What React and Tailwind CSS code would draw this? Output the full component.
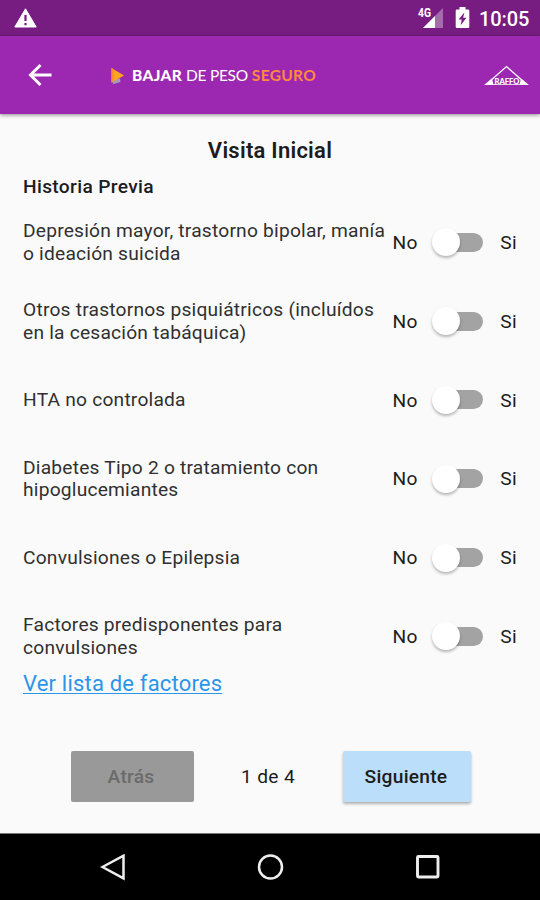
import React, { useState } from 'react';

const preguntas = [
  { id: 'depresion', lineas: ['Depresión mayor, trastorno bipolar, manía', 'o ideación suicida'] },
  { id: 'psiquiatricos', lineas: ['Otros trastornos psiquiátricos (incluídos', 'en la cesación tabáquica)'] },
  { id: 'hta', lineas: ['HTA no controlada'] },
  { id: 'diabetes', lineas: ['Diabetes Tipo 2 o tratamiento con', 'hipoglucemiantes'] },
  { id: 'convulsiones', lineas: ['Convulsiones o Epilepsia'] },
  { id: 'factores', lineas: ['Factores predisponentes para', 'convulsiones'] }
];

const StatusBar = () => (
  <div className="flex h-9 shrink-0 items-center bg-[#771d82] pl-[14px] pr-[11px] text-white">
    <svg className="h-5 w-[23px]" viewBox="0 0 23 20">
      <path d="M11.5 .8 L22.2 19 H.8 Z" fill="#fff" stroke="#fff" strokeLinejoin="round" />
      <path d="M11.5 7v6M11.5 15v2.2" stroke="#771d82" strokeWidth="2.2" />
    </svg>
    <svg className="ml-auto h-[22px] w-[27px]" viewBox="0 0 27 22">
      <path d="M26 1V21H6Z" fill="#fff" opacity=".35" />
      <path d="M18 9V21H6Z" fill="#fff" />
      <path d="M0 0H14V11.500H0Z" fill="#771d82" />
      <text x="1" y="10" fill="#fff" fontFamily="Roboto, sans-serif" fontSize="12" fontWeight="700" letterSpacing="0" textLength="13" lengthAdjust="spacingAndGlyphs">
        4G
      </text>
    </svg>
    <svg className="ml-[11px] h-[22px] w-[15px]" viewBox="0 0 15 22">
      <path d="M4.5 0h6v2.5H13a1.3 1.3 0 0 1 1.3 1.3v15.9A1.3 1.3 0 0 1 13 21H2a1.3 1.3 0 0 1-1.3-1.3V3.8A1.3 1.3 0 0 1 2 2.5h2.5Z" fill="#fff" />
      <path d="M9.3 5.5 3.6 12.6h3.1L5.7 18.3l5.7-7.6H8.2Z" fill="#771d82" />
    </svg>
    <span className="ml-[9px] mt-[2px] w-[50px] whitespace-nowrap text-[20px] font-medium leading-6 tracking-[-0.1px]">10:05</span>
  </div>
);

const AppBar = () => (
  <header className="relative flex h-[78px] shrink-0 items-center bg-[#9c27b0] pl-[28px] pr-[11px] shadow-[0_1px_4px_rgba(0,0,0,0.45)]">
    <svg className="h-6 w-6" viewBox="0 0 24 24" fill="none" stroke="#fff" strokeWidth="3">
      <path d="M23.500 12H2.500M12.500 2 2.500 12l10 10" />
    </svg>
    <svg className="ml-[59px] h-[17px] w-[13px]" viewBox="0 0 13 17">
      <path d="M1 13 9 11.500 9.500 15 2 17Z" fill="#a79bb5" />
      <path d="M.5 1 13 8.500 .5 15.500Z" fill="#ffa51f" />
      <path d="M.5 1 3 2.500 2 14.700 .5 15.500Z" fill="#ff8a2b" />
      <path d="M1.500 15 7 12 9 13.500 4 16.500Z" fill="#a79bb5" />
    </svg>
    <div className="ml-2 flex w-[184px] gap-1 whitespace-nowrap font-['Lato'] text-[15.500px] leading-5 text-white">
      <span className="font-black">BAJAR</span>
      <span className="tracking-[-0.3px]">DE PESO</span>
      <span className="font-bold text-[#ff8a3c]">SEGURO</span>
    </div>
    <svg className="ml-auto h-[22px] w-[45px]" viewBox="0 0 45 22">
      <path d="M5 18 22.500 2.500 40 18" fill="none" stroke="#fff" strokeWidth="1.300" />
      <path d="M0 21 8 14.500 9.500 20.500ZM45 21 37 14.500 35.500 20.500Z" fill="#fff" />
      <path d="M1 20.500H44" stroke="#fff" strokeWidth=".8" />
      <text x="10.500" y="19.500" fill="#fff" fontFamily="Lato, sans-serif" fontSize="8" fontWeight="900" letterSpacing="0" textLength="25" lengthAdjust="spacingAndGlyphs">
        RAFFO
      </text>
    </svg>
  </header>
);

const Interruptor = ({ activo, onClick }) => (
  <button
    type="button"
    role="switch"
    aria-checked={activo}
    onClick={onClick}
    className={`flex h-7 w-[51px] items-center ${activo ? 'justify-end' : 'justify-start'}`}
  >
    <span className={`flex h-[19px] w-[50px] items-center rounded-full bg-[#a3a3a3] ${activo ? 'justify-end' : ''}`}>
      <span className="-ml-px size-7 shrink-0 rounded-full bg-white shadow-[0_2px_3px_rgba(0,0,0,0.28)]" />
    </span>
  </button>
);

const FilaPregunta = ({ lineas, activo, onToggle }) => (
  <div className="flex h-[78.800px] items-center">
    <div className="w-[370px] whitespace-nowrap pt-px leading-[22.500px] tracking-[0.21px] text-[#303030]">
      {lineas.map((linea) => (
        <div key={linea}>{linea}</div>
      ))}
    </div>
    <span className="w-[41px] pt-[2px]">No</span>
    <Interruptor activo={activo} onClick={onToggle} />
    <span className="ml-[16px] pt-[2px]">Si</span>
  </div>
);

const NavBar = () => (
  <nav className="flex h-[67px] shrink-0 items-center justify-between border-t border-[#777] bg-black pl-[100px] pr-[99px]">
    <svg className="size-[27px]" viewBox="0 0 27 27" fill="none" stroke="#eee" strokeWidth="2.500">
      <path d="M23.500 1.700V24.300L2.500 13Z" />
    </svg>
    <svg className="size-[27px]" viewBox="0 0 27 27" fill="none" stroke="#eee" strokeWidth="2.500">
      <circle cx="13.500" cy="13" r="11.500" />
    </svg>
    <svg className="size-[27px]" viewBox="0 0 27 27" fill="none" stroke="#eee" strokeWidth="2.900">
      <rect x="3.500" y="2.500" width="20.500" height="20.500" rx="1" />
    </svg>
  </nav>
);

export default function App() {
  const [respuestas, setRespuestas] = useState({});

  const handleToggle = (id) => {
    setRespuestas((prev) => ({ ...prev, [id]: !prev[id] }));
  };

  return (
    <div className="flex h-[900px] w-[540px] flex-col overflow-hidden bg-[#fafafa] font-['Roboto',sans-serif] text-[19.200px] tracking-[0.33px] text-[#1c1c1c]">
      <StatusBar />
      <AppBar />
      <main className="flex grow flex-col px-[23px] pt-[23px]">
        <h1 className="text-center text-[22px] font-semibold leading-7 tracking-[0.25px]">Visita Inicial</h1>
        <h2 className="mt-[10px] font-medium leading-6">Historia Previa</h2>
        <div className="mt-1">
          {preguntas.map((p) => (
            <FilaPregunta
              key={p.id}
              lineas={p.lineas}
              activo={Boolean(respuestas[p.id])}
              onToggle={() => handleToggle(p.id)}
            />
          ))}
        </div>
        <a href="#factores" className="-mt-[6px] self-start text-[22px] leading-7 tracking-[0.19px] text-[#2b95ea] underline decoration-1 underline-offset-2">
          Ver lista de factores
        </a>
        <div className="mt-[53px] flex items-center pl-[48px]">
          <button type="button" disabled className="h-[51px] w-[123px] rounded-[2px] bg-[#999] pr-[3px] pt-[3px] font-medium tracking-[0.25px] text-[#6b6b6b]">
            Atrás
          </button>
          <span className="w-[149px] pr-px pt-[3px] text-center">1 de 4</span>
          <button type="button" className="h-[51px] w-[128px] rounded-[2px] bg-[#bbdefb] pr-[2px] pt-[3px] font-medium tracking-[0.25px] shadow-[0_2px_3px_rgba(0,0,0,0.3)]">
            Siguiente
          </button>
        </div>
      </main>
      <NavBar />
    </div>
  );
}
